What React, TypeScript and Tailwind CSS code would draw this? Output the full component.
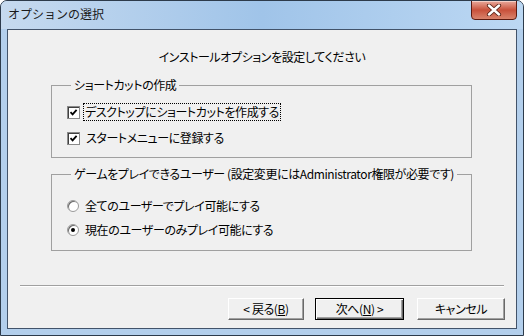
import React from "react";

const jp = "font-['Noto_Sans_CJK_JP','Noto_Sans',sans-serif] [font-feature-settings:'palt'] text-[12px] leading-[16px] tracking-[-0.4px] text-black whitespace-nowrap";

function CheckBox() {
  return (
    <span className="flex h-[13px] w-[13px] shrink-0 items-center justify-center border border-[#8a8a8a] bg-white shadow-[inset_1px_1px_0_#404040]">
      <svg width="9" height="9" viewBox="0 0 9 9">
        <path d="M1.5 4.2 L3.6 6.4 L7.6 1.8" fill="none" stroke="#000" strokeWidth="1.8" />
      </svg>
    </span>
  );
}

function Radio({ checked }: { checked?: boolean }) {
  return (
    <span className="flex h-[12px] w-[12px] shrink-0 items-center justify-center rounded-full border border-[#9a9a9a] bg-white shadow-[inset_1px_1px_0_#6a6a6a]">
      {checked && <span className="h-[4px] w-[4px] rounded-full bg-black" />}
    </span>
  );
}

function WinButton({
  children,
  width,
  primary
}: {
  children: React.ReactNode;
  width: string;
  primary?: boolean;
}) {
  return (
    <button
      type="button"
      className={[
        "flex h-[22px] items-center justify-center bg-[#f0f0f0]",
        width,
        primary
          ? "border border-black shadow-[inset_1px_1px_0_#ffffff,inset_-1px_-1px_0_#696969,inset_-2px_-2px_0_#a0a0a0]"
          : "border border-t-white border-l-white border-b-[#696969] border-r-[#696969] shadow-[inset_-1px_-1px_0_#a0a0a0]",
        jp
      ].join(" ")}
    >
      {children}
    </button>
  );
}

export default function App() {
  return (
    <div className="relative flex h-[336px] w-[524px] flex-col overflow-hidden rounded-t-[7px] border border-[#2d3b4b] bg-[#b3cfec]">
      <div className="flex h-[28px] shrink-0 items-start bg-gradient-to-r from-[#c6daef] via-[#a0c4e9] to-[#bcd8f3] pl-[7px] pt-[5px]">
        <span className="font-['Noto_Sans_CJK_JP',sans-serif] text-[12px] leading-[16px] text-[#1a1a1a]">
          オプションの選択
        </span>
      </div>

      <div className="absolute right-[6px] top-[-1px] flex h-[20px] w-[46px] items-center justify-center rounded-b-[4px] border border-[#5c1a10] bg-gradient-to-b from-[#e8a99c] via-[#c8503a] to-[#d9836c] shadow-[inset_0_1px_0_#f4cfc6]">
        <svg width="16" height="12" viewBox="0 0 16 12">
          <path d="M3 1.5 L13 10.5 M13 1.5 L3 10.5" stroke="#5a2418" strokeWidth="4.2" strokeLinecap="round" />
          <path d="M3 1.5 L13 10.5 M13 1.5 L3 10.5" stroke="#ffffff" strokeWidth="2.4" strokeLinecap="round" />
        </svg>
      </div>

      <div className="mx-[6px] mb-[6px] flex flex-1 flex-col border border-[#42536a] bg-[#f0f0f0]">
        <p className={`pt-[19px] text-center ${jp}`}>インストールオプションを設定してください</p>

        <fieldset className="ml-[43px] mt-[12px] w-[421px] border border-[#a0a0a0] pb-[10px] pl-[15px]">
          <legend className={`ml-[4px] px-[3px] ${jp}`}>ショートカットの作成</legend>
          <div className="flex flex-col gap-[8px] pt-[10px]">
            <label className="flex h-[18px] items-center">
              <CheckBox />
              <span className={`ml-[3px] border border-dotted border-black px-[1px] ${jp}`}>
                デスクトップにショートカットを作成する
              </span>
            </label>
            <label className="flex h-[18px] items-center">
              <CheckBox />
              <span className={`ml-[5px] px-[1px] ${jp}`}>スタートメニューに登録する</span>
            </label>
          </div>
        </fieldset>

        <fieldset className="ml-[43px] mt-[8px] w-[421px] border border-[#a0a0a0] pb-[11px] pl-[15px]">
          <legend className={`ml-[4px] px-[3px] ${jp}`}>
            ゲームをプレイできるユーザー (設定変更にはAdministrator権限が必要です)
          </legend>
          <div className="flex flex-col gap-[6px] pt-[15px]">
            <label className="flex h-[18px] items-center">
              <Radio />
              <span className={`ml-[6px] ${jp}`}>全てのユーザーでプレイ可能にする</span>
            </label>
            <label className="flex h-[18px] items-center">
              <Radio checked />
              <span className={`ml-[6px] ${jp}`}>現在のユーザーのみプレイ可能にする</span>
            </label>
          </div>
        </fieldset>

        <div className="mt-auto pb-[8px]">
          <div className="mx-[12px] h-[2px] border-t border-b border-t-[#a0a0a0] border-b-white" />
          <div className="mt-[11px] flex justify-end pr-[11px]">
            <WinButton width="w-[76px]">
              &lt; 戻る(<span className="underline">B</span>)
            </WinButton>
            <div className="ml-[11px]">
              <WinButton width="w-[89px]" primary>
                次へ(<span className="underline">N</span>) &gt;
              </WinButton>
            </div>
            <div className="ml-[13px]">
              <WinButton width="w-[88px]">キャンセル</WinButton>
            </div>
          </div>
        </div>
      </div>
    </div>
  );
}
